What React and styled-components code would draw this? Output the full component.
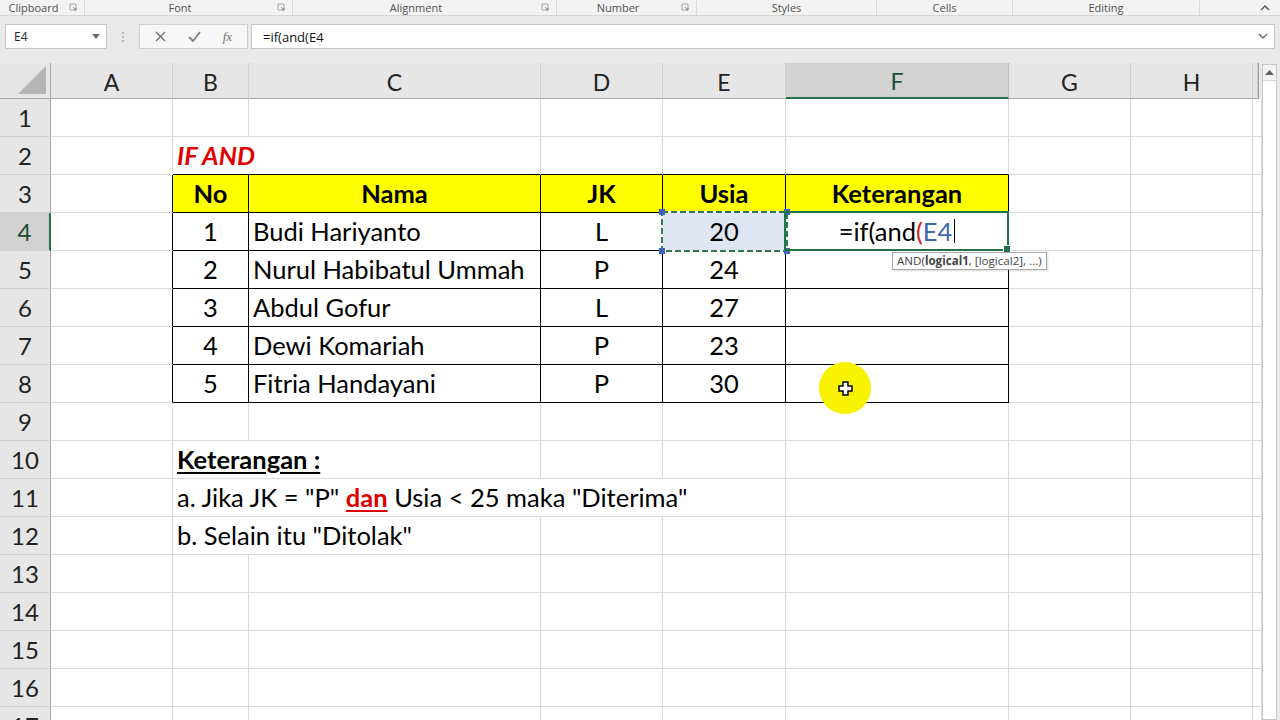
import React from "react";
import styled, { createGlobalStyle } from "styled-components";

const GREEN = "#217346";
const GRID = "#d9d9d9";
const HEAD_LINE = "#a8a8a8";
const CELL_FONT = `Lato, "Open Sans", sans-serif`;
const UI_FONT = `"Open Sans", "Noto Sans", sans-serif`;

const COLS = [
  { id: "A", w: 122 },
  { id: "B", w: 76 },
  { id: "C", w: 292 },
  { id: "D", w: 122 },
  { id: "E", w: 123 },
  { id: "F", w: 223 },
  { id: "G", w: 122 },
  { id: "H", w: 122 },
  { id: "", w: 5 },
];

const GROUPS = [
  { label: "Clipboard", w: 85, launcher: true },
  { label: "Font", w: 208, launcher: true },
  { label: "Alignment", w: 264, launcher: true },
  { label: "Number", w: 140, launcher: true },
  { label: "Styles", w: 180 },
  { label: "Cells", w: 136 },
  { label: "Editing", w: 187 },
];

const people = [
  ["1", "Budi Hariyanto", "L", "20"],
  ["2", "Nurul Habibatul Ummah", "P", "24"],
  ["3", "Abdul Gofur", "L", "27"],
  ["4", "Dewi Komariah", "P", "23"],
  ["5", "Fitria Handayani", "P", "30"],
];

const GlobalStyle = createGlobalStyle`
  html, body { margin: 0; padding: 0; background: #fff; overflow: hidden; }
  body { font-family: ${UI_FONT}; }
  * { box-sizing: border-box; }
`;

const Page = styled.div`
  width: 1280px;
  height: 720px;
  overflow: hidden;
  position: relative;
  background: #e9e9e9;
`;

/* ribbon group labels */
const Ribbon = styled.div`
  display: flex;
  height: 16px;
  background: #f3f3f3;
  border-bottom: 1px solid #d6d6d6;
`;

const Group = styled.div`
  display: flex;
  align-items: center;
  width: ${(p) => p.$w}px;
  border-right: 1px solid #dadada;
  height: 15px;
`;

const GroupLabel = styled.span`
  flex: 1;
  text-align: center;
  font-size: 11px;
  color: #505050;
  line-height: 15px;
`;

const Launcher = styled.svg`
  width: 17px;
  height: 9px;
  flex: none;
`;

const Collapse = styled.div`
  flex: 1;
  display: flex;
  justify-content: flex-end;
  align-items: center;
  padding-right: 10px;
`;

/* formula bar */
const FormulaRow = styled.div`
  display: flex;
  align-items: center;
  height: 47px;
  padding: 0 5px 6px 5px;
`;

const NameBox = styled.div`
  width: 102px;
  height: 25px;
  background: #fff;
  border: 1px solid #c6c6c6;
  display: flex;
  align-items: center;
  justify-content: space-between;
  padding: 0 6px 0 8px;
  font-size: 12px;
  color: #222;
`;

const Grip = styled.div`
  width: 32px;
  display: flex;
  flex-direction: column;
  align-items: center;
  gap: 2px;
  span {
    width: 2px;
    height: 2px;
    background: #b8b8b8;
  }
`;

const ButtonBox = styled.div`
  width: 109px;
  height: 25px;
  display: flex;
  align-items: center;
  justify-content: space-around;
  background: #f7f7f7;
  border: 1px solid #cfcfcf;
  padding: 0 4px;
  margin-right: 3px;
`;

const Fx = styled.span`
  font-family: "Liberation Serif", serif;
  font-style: italic;
  font-size: 13px;
  color: #707070;
`;

const FormulaInput = styled.div`
  flex: 1;
  height: 25px;
  background: #fff;
  border: 1px solid #c6c6c6;
  display: flex;
  align-items: center;
  justify-content: space-between;
  padding: 0 6px 0 11px;
  font-size: 13px;
  color: #111;
`;

/* sheet */
const SheetArea = styled.div`
  display: flex;
  height: 657px;
`;

const Grid = styled.div`
  display: grid;
  grid-template-columns: 51px ${COLS.map((c) => `${c.w}px`).join(" ")};
  grid-template-rows: 36px;
  grid-auto-rows: 38px;
  width: 1258px;
  background: #fff;
  align-content: start;
`;

const Corner = styled.div`
  background: #e6e6e6;
  border-right: 1px solid ${HEAD_LINE};
  border-bottom: 1px solid ${HEAD_LINE};
  display: flex;
  align-items: flex-end;
  justify-content: flex-end;
  padding: 0 4px 4px 0;
`;

const ColHead = styled.div`
  background: ${(p) => (p.$active ? "#d2d2d2" : "#e6e6e6")};
  border-right: 1px solid ${(p) => (p.$active ? "#bdbdbd" : "#cfcfcf")};
  border-bottom: ${(p) => (p.$active ? `2px solid ${GREEN}` : `1px solid ${HEAD_LINE}`)};
  display: flex;
  align-items: center;
  justify-content: center;
  font-family: ${CELL_FONT};
  font-size: 23px;
  color: ${(p) => (p.$active ? "#1d4f33" : "#222")};
  padding-top: 2px;
`;

const RowHead = styled.div`
  background: ${(p) => (p.$active ? "#d2d2d2" : "#e6e6e6")};
  border-right: ${(p) => (p.$active ? `2px solid ${GREEN}` : `1px solid ${HEAD_LINE}`)};
  border-bottom: 1px solid #cfcfcf;
  display: flex;
  align-items: center;
  justify-content: center;
  font-family: ${CELL_FONT};
  font-size: 24px;
  color: ${(p) => (p.$active ? "#1d4f33" : "#222")};
`;

const Cell = styled.div`
  position: relative;
  grid-column: span ${(p) => p.$span || 1};
  background: ${(p) => p.$bg || "#fff"};
  border-right: 1px solid ${(p) => p.$rc};
  border-bottom: 1px solid ${(p) => p.$bc};
  display: flex;
  align-items: center;
  justify-content: ${(p) => (p.$center ? "center" : "flex-start")};
  padding: 0 4px 2px 4px;
  font-family: ${CELL_FONT};
  font-size: 25.5px;
  font-weight: ${(p) => (p.$bold ? 700 : 400)};
  color: #000;
  white-space: nowrap;
`;

const Title = styled.span`
  color: #e00000;
  font-weight: 700;
  font-style: italic;
`;

const Underlined = styled.span`
  text-decoration: underline;
  text-underline-offset: 3px;
  text-decoration-thickness: 2px;
  font-weight: 700;
  color: ${(p) => p.$color || "inherit"};
`;

const Ants = styled.svg`
  position: absolute;
  left: -2px;
  top: -2px;
  width: 127px;
  height: 41px;
  z-index: 3;
  overflow: visible;
`;

const Active = styled.div`
  position: absolute;
  left: -2px;
  top: -2px;
  right: -1px;
  bottom: -1px;
  border: 2px solid ${GREEN};
  z-index: 4;
  &::after {
    content: "";
    position: absolute;
    right: -4px;
    bottom: -4px;
    width: 6px;
    height: 6px;
    background: ${GREEN};
    border: 1px solid #fff;
  }
`;

const Editing = styled.span`
  display: inline-flex;
  align-items: center;
`;

const Ref = styled.span`
  color: ${(p) => p.$color};
`;

const Caret = styled.span`
  display: inline-block;
  width: 1px;
  height: 24px;
  background: #000;
  margin-left: 2px;
`;

const Tooltip = styled.div`
  position: absolute;
  left: 106px;
  top: 39px;
  z-index: 6;
  background: #fff;
  border: 1px solid #a9a9a9;
  box-shadow: 1px 1px 2px rgba(0, 0, 0, 0.15);
  padding: 0 4px 1px 4px;
  font-family: ${UI_FONT};
  font-size: 11.6px;
  font-weight: 400;
  color: #444;
  line-height: 15px;
  b {
    font-weight: 700;
  }
`;

const Spot = styled.div`
  position: absolute;
  left: 33px;
  top: -3px;
  width: 52px;
  height: 52px;
  border-radius: 50%;
  background: #f9f200;
  z-index: 6;
  display: flex;
  align-items: center;
  justify-content: center;
`;

const Scrollbar = styled.div`
  width: 22px;
  border-left: 1px solid #9c9c9c;
  background: #e9e9e9;
  padding: 1px 3px 0 3px;
  display: flex;
`;

const Track = styled.div`
  flex: 1;
  background: #fff;
  border: 1px solid #c8c8c8;
  display: flex;
  flex-direction: column;
`;

const ArrowBtn = styled.div`
  height: 16px;
  background: #f4f4f4;
  border-bottom: 1px solid #d8d8d8;
  display: flex;
  align-items: center;
  justify-content: center;
`;

const inTable = (r, c) => r >= 3 && r <= 8 && c >= 1 && c <= 5;

function rowContent(r) {
  const items = {};
  if (r === 2) items[1] = { span: 2, node: <Title>IF AND</Title> };
  if (r === 3) {
    ["No", "Nama", "JK", "Usia", "Keterangan"].forEach((t, i) => {
      items[i + 1] = { node: t, center: true, bold: true, bg: "#ffff00" };
    });
  }
  if (r >= 4 && r <= 8) {
    const p = people[r - 4];
    items[1] = { node: p[0], center: true };
    items[2] = { node: p[1] };
    items[3] = { node: p[2], center: true };
    items[4] = { node: p[3], center: true, bg: r === 4 ? "#dfe5f3" : undefined };
    items[5] = { node: null, center: true };
  }
  if (r === 10) items[1] = { span: 2, node: <Underlined>Keterangan :</Underlined> };
  if (r === 11)
    items[1] = {
      span: 4,
      node: (
        <span>
          a. Jika JK = "P" <Underlined $color="#e00000">dan</Underlined> Usia &lt; 25 maka "Diterima"
        </span>
      ),
    };
  if (r === 12) items[1] = { span: 2, node: <span>b. Selain itu "Ditolak"</span> };
  return items;
}

function extras(r, c) {
  if (r === 4 && c === 4) {
    return (
      <Ants viewBox="0 0 127 41">
        <rect x="1" y="1" width="125" height="39" fill="none" stroke="#fff" strokeWidth="2" />
        <rect x="1" y="1" width="125" height="39" fill="none" stroke="#2c7a50" strokeWidth="2" strokeDasharray="6 3" />
        {[
          [1, 1],
          [126, 1],
          [1, 40],
          [126, 40],
        ].map(([x, y]) => (
          <rect key={`${x}-${y}`} x={x - 3} y={y - 3} width="6" height="6" fill="#3f64b8" />
        ))}
      </Ants>
    );
  }
  if (r === 4 && c === 5) {
    return (
      <>
        <Active />
        <Editing>
          =if(and<Ref $color="#d81e1e">(</Ref>
          <Ref $color="#3e67b1">E4</Ref>
          <Caret />
        </Editing>
        <Tooltip>
          AND(<b>logical1</b>, [logical2], ...)
        </Tooltip>
      </>
    );
  }
  if (r === 8 && c === 5) {
    return (
      <Spot>
        <svg width="15" height="15" viewBox="0 0 15 15">
          <path d="M5 1h5v4h4v5h-4v4H5v-4H1V5h4z" fill="#fff" stroke="#000" strokeWidth="1.5" />
        </svg>
      </Spot>
    );
  }
  return null;
}

function SheetRow({ r }) {
  const items = rowContent(r);
  const cells = [];
  let c = 0;
  while (c < COLS.length) {
    const it = items[c] || {};
    const span = it.span || 1;
    const last = c + span - 1;
    let bottomBlack = false;
    for (let k = c; k <= last; k++) {
      if (inTable(r, k) || inTable(r + 1, k)) bottomBlack = true;
    }
    const rightBlack = inTable(r, last) || inTable(r, last + 1);
    cells.push(
      <Cell
        key={c}
        $span={span}
        $center={it.center}
        $bold={it.bold}
        $bg={it.bg}
        $rc={rightBlack ? "#000" : GRID}
        $bc={bottomBlack ? "#000" : GRID}
      >
        {it.node}
        {extras(r, c)}
      </Cell>
    );
    c += span;
  }
  return (
    <>
      <RowHead $active={r === 4}>{r}</RowHead>
      {cells}
    </>
  );
}

const LauncherIcon = () => (
  <Launcher viewBox="0 0 17 9">
    <path d="M3 1h6v6H3z" fill="none" stroke="#a8a8a8" strokeWidth="1" />
    <path d="M6 4l3 3M9 5v2H7" fill="none" stroke="#8a8a8a" strokeWidth="1" />
  </Launcher>
);

export default function App() {
  const rows = Array.from({ length: 17 }, (_, i) => i + 1);
  return (
    <Page>
      <GlobalStyle />
      <Ribbon>
        {GROUPS.map((g) => (
          <Group key={g.label} $w={g.w}>
            <GroupLabel>{g.label}</GroupLabel>
            {g.launcher && <LauncherIcon />}
          </Group>
        ))}
        <Collapse>
          <svg width="10" height="7" viewBox="0 0 10 7">
            <path d="M1 6l4-4 4 4" fill="none" stroke="#555" strokeWidth="1.4" />
          </svg>
        </Collapse>
      </Ribbon>

      <FormulaRow>
        <NameBox>
          <span>E4</span>
          <svg width="8" height="5" viewBox="0 0 8 5">
            <path d="M0 0h8L4 5z" fill="#6f6f6f" />
          </svg>
        </NameBox>
        <Grip>
          <span />
          <span />
          <span />
        </Grip>
        <ButtonBox>
          <svg width="11" height="11" viewBox="0 0 11 11">
            <path d="M1 1l9 9M10 1l-9 9" stroke="#707070" strokeWidth="1.4" />
          </svg>
          <svg width="13" height="11" viewBox="0 0 13 11">
            <path d="M1 6l4 4 7-9" fill="none" stroke="#808080" strokeWidth="1.8" />
          </svg>
          <Fx>fx</Fx>
        </ButtonBox>
        <FormulaInput>
          <span>=if(and(E4</span>
          <svg width="10" height="7" viewBox="0 0 10 7">
            <path d="M1 1l4 4 4-4" fill="none" stroke="#666" strokeWidth="1.4" />
          </svg>
        </FormulaInput>
      </FormulaRow>

      <SheetArea>
        <Grid>
          <Corner>
            <svg width="28" height="28" viewBox="0 0 28 28">
              <path d="M28 0v28H0z" fill="#b5b5b5" />
            </svg>
          </Corner>
          {COLS.map((c) => (
            <ColHead key={c.id || "x"} $active={c.id === "F"}>
              {c.id}
            </ColHead>
          ))}
          {rows.map((r) => (
            <SheetRow key={r} r={r} />
          ))}
        </Grid>
        <Scrollbar>
          <Track>
            <ArrowBtn>
              <svg width="9" height="5" viewBox="0 0 9 5">
                <path d="M0 5L4.5 0 9 5z" fill="#606060" />
              </svg>
            </ArrowBtn>
          </Track>
        </Scrollbar>
      </SheetArea>
    </Page>
  );
}
